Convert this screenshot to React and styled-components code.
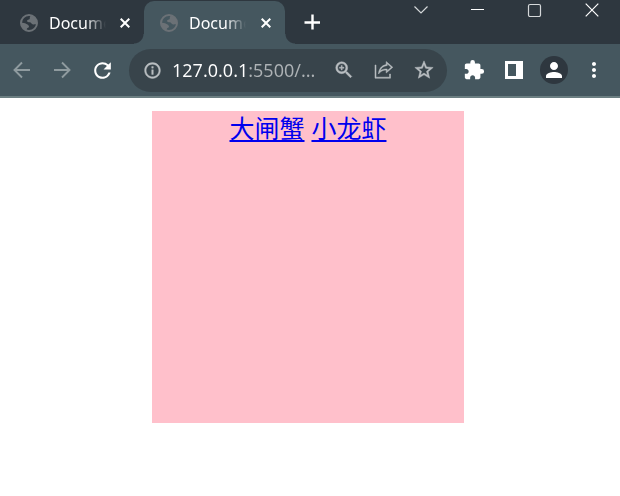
import React from "react";
import styled, { createGlobalStyle } from "styled-components";
import {
  MdExtension,
  MdInfoOutline,
  MdMoreVert,
  MdPerson,
  MdRefresh,
  MdStarBorder,
  MdZoomIn,
} from "react-icons/md";

const colors = {
  frame: "#2e373f",
  toolbar: "#45575f",
  field: "#38444b",
  divider: "#6c7f82",
  icon: "#ffffff",
  muted: "#b9bec1",
  disabled: "#8f9b9f",
};

const GlobalStyle = createGlobalStyle`
  * { box-sizing: border-box; }
  body { margin: 0; background: #ffffff; }
  button, input { font: inherit; color: inherit; }
`;

const Browser = styled.div`
  min-height: 100vh;
  display: flex;
  flex-direction: column;
  font-family: "Noto Sans", "Open Sans", sans-serif;
`;

const TitleBar = styled.header`
  display: flex;
  align-items: flex-start;
  height: 44px;
  padding-left: 4px;
  background: ${colors.frame};
`;

const TabList = styled.div`
  display: flex;
  align-self: stretch;
  padding-top: 1px;
`;

const Tab = styled.div`
  position: relative;
  display: flex;
  align-items: center;
  width: ${(p) => (p.$active ? 141 : 140)}px;
  padding: 0 10px 0 15px;
  border-radius: 10px 10px 0 0;
  background: ${(p) => (p.$active ? colors.toolbar : "transparent")};

  &::before,
  &::after {
    content: "";
    display: ${(p) => (p.$active ? "block" : "none")};
    position: absolute;
    bottom: 0;
    width: 10px;
    height: 10px;
  }
  &::before {
    right: 100%;
    background: radial-gradient(circle at 0 0, transparent 9px, ${colors.toolbar} 10px);
  }
  &::after {
    left: 100%;
    background: radial-gradient(circle at 100% 0, transparent 9px, ${colors.toolbar} 10px);
  }
`;

const TabButton = styled.button`
  display: flex;
  align-items: center;
  gap: 10px;
  flex: 1;
  min-width: 0;
  padding: 0;
  border: 0;
  background: none;
  color: #ffffff;
  font-size: 16px;
  line-height: 24px;
`;

const TabTitle = styled.span`
  width: 57px;
  overflow: hidden;
  white-space: nowrap;
  text-align: left;
  mask-image: linear-gradient(to right, #000 36px, transparent 57px);
`;

const IconButton = styled.button`
  display: flex;
  align-items: center;
  justify-content: center;
  flex: none;
  width: ${(p) => p.$width || 40}px;
  height: ${(p) => p.$height || 40}px;
  padding: 0;
  border: 0;
  background: none;
  color: ${(p) => p.$color || colors.icon};
`;

const WindowControls = styled.div`
  display: flex;
  margin-left: auto;
`;

const Toolbar = styled.nav`
  display: flex;
  align-items: center;
  height: 54px;
  padding: 0 6px 0 2px;
  background: ${colors.toolbar};
  border-bottom: 2px solid ${colors.divider};
`;

const AddressBar = styled.div`
  display: flex;
  align-items: center;
  flex: 1;
  min-width: 0;
  height: 43px;
  margin: 0 7px;
  padding: 0 3px;
  border-radius: 22px;
  background: ${colors.field};
`;

const AddressInput = styled.input`
  flex: 1;
  min-width: 0;
  padding: 0;
  border: 0;
  outline: 0;
  font-size: 18px;
  line-height: 26px;
  background: linear-gradient(to right, #ffffff 74px, #adb2b5 74px);
  background-clip: text;
  -webkit-background-clip: text;
  -webkit-text-fill-color: transparent;
`;

const FieldButton = styled(IconButton)`
  color: ${colors.muted};

  path:not([fill="none"]) {
    stroke: currentColor;
    stroke-width: 0.5px;
  }
`;

const Avatar = styled.span`
  display: flex;
  align-items: center;
  justify-content: center;
  width: 28px;
  height: 28px;
  border-radius: 50%;
  background: ${colors.frame};
`;

const Page = styled.main`
  flex: 1;
  padding: 13px 4px 13px 0;
`;

const PinkBox = styled.section`
  width: 312px;
  height: 312px;
  margin: 0 auto;
  background: #ffc0cb;
  text-align: center;
  font-family: "Liberation Sans", "Noto Sans CJK SC", sans-serif;
  font-size: 25px;
  line-height: 36px;
`;

const PageLink = styled.a`
  color: #0000ee;
  text-decoration: underline;
  text-decoration-thickness: 2px;
  text-underline-offset: 2px;
`;

const Stroke = styled.svg`
  display: block;
  fill: none;
  stroke: currentColor;
`;

const GlobeIcon = styled.svg`
  flex: none;
  fill: none;
  stroke: #6b7176;
`;

const Favicon = () => (
  <GlobeIcon width="20" height="20" viewBox="0 0 20 20" strokeWidth="2">
    <circle cx="10" cy="10" r="8" />
    <path
      fill="#6b7176"
      stroke="none"
      d="M12 2.5C11 3.5 10.5 4.5 10.8 6c-1 .8-2.8.5-2.8 2 0 1 1.5 1.2 3 1.2 1.5.3 1.5 2 3 2.2 1.500.2 2.500-.7 4-.4V8C17 5 15 3 12 2.500zM2 9.500c2 .2 3.500.4 5.500 1.500 1.500.8 2.500 1.500 2.500 2.500 0 1.200-1.500 1.200-2 2-.3.7 0 1.500-.5 2C4.500 16.500 2 13.500 2 9.500z"
    />
  </GlobeIcon>
);

const TabCloseIcon = () => (
  <Stroke width="10" height="10" viewBox="0 0 10 10" strokeWidth="2">
    <path d="M.7.7 9.3 9.3M9.3.7.7 9.3" />
  </Stroke>
);

const PlusIcon = () => (
  <Stroke width="16" height="16" viewBox="0 0 16 16" strokeWidth="2.4">
    <path d="M8.5 .5v15M.5 8.5h16" />
  </Stroke>
);

const ChevronIcon = () => (
  <Stroke width="14" height="8" viewBox="0 0 14 8" strokeWidth="1.2">
    <path d="M.5.5 7 7 13.5.5" />
  </Stroke>
);

const MinimizeIcon = () => (
  <Stroke width="13" height="2" viewBox="0 0 13 2" strokeWidth="1">
    <path d="M0 .5h13" />
  </Stroke>
);

const MaximizeIcon = () => (
  <Stroke width="15" height="14" viewBox="0 0 15 14" strokeWidth="1.2">
    <rect x="1.5" y="1.5" width="12" height="12" rx="1.5" />
  </Stroke>
);

const CloseIcon = () => (
  <Stroke width="14" height="14" viewBox="0 0 14 14" strokeWidth="1.2">
    <path d="M.7.7l12.6 12.6M13.3.7.7 13.3" />
  </Stroke>
);

const BackIcon = () => (
  <Stroke width="18" height="18" viewBox="0 0 18 18" strokeWidth="1.9">
    <path d="M17 9H2M9 1.5 1.5 9 9 16.5" />
  </Stroke>
);

const ForwardIcon = () => (
  <Stroke width="18" height="18" viewBox="0 0 18 18" strokeWidth="1.9">
    <path d="M1 9h15M9 1.5 16.5 9 9 16.5" />
  </Stroke>
);

const ShareIcon = () => (
  <svg width="20" height="20" viewBox="0 0 20 20" fill="currentColor" aria-hidden="true">
    <path d="M1 5h1v12.200h13.500V14h1v4.200H1z" />
    <path
      fillRule="evenodd"
      d="M12.200 1.500l6.600 5.800-6.600 5.700V10C9 10 6.800 11 4.500 14c.3-5 3.200-8.700 7.700-9.400zM13.200 3.700v1.800C9.300 6 7 8 6 11c2-1.500 4.200-2 7.200-2v1.800l4-3.500z"
    />
  </svg>
);

const SidePanelIcon = () => (
  <Stroke width="18" height="18" viewBox="0 0 18 18" strokeWidth="3">
    <path d="M1.5 1.5h15v15h-15z" />
    <path fill="currentColor" stroke="none" d="M11 1h6v16h-6z" />
  </Stroke>
);

const tabs = [
  { id: 1, title: "Document", active: false },
  { id: 2, title: "Document", active: true },
];

const links = ["大闸蟹", "小龙虾"];

export default function App() {
  return (
    <Browser>
      <GlobalStyle />
      <TitleBar>
        <TabList role="tablist">
          {tabs.map((tab) => (
            <Tab key={tab.id} $active={tab.active}>
              <TabButton role="tab" aria-selected={tab.active}>
                <Favicon />
                <TabTitle>{tab.title}</TabTitle>
              </TabButton>
              <IconButton $width={18} $height={18} aria-label="Close tab">
                <TabCloseIcon />
              </IconButton>
            </Tab>
          ))}
        </TabList>
        <IconButton $width={54} $height={44} aria-label="New tab">
          <PlusIcon />
        </IconButton>
        <WindowControls>
          <IconButton $width={56} $height={20} $color="#d5d8da" aria-label="Search tabs">
            <ChevronIcon />
          </IconButton>
          <IconButton $width={57} $height={20} aria-label="Minimize">
            <MinimizeIcon />
          </IconButton>
          <IconButton $width={57} $height={20} $color="#d5d8da" aria-label="Maximize">
            <MaximizeIcon />
          </IconButton>
          <IconButton $width={57} $height={20} aria-label="Close window">
            <CloseIcon />
          </IconButton>
        </WindowControls>
      </TitleBar>

      <Toolbar aria-label="Browser toolbar">
        <IconButton $color={colors.disabled} aria-label="Back">
          <BackIcon />
        </IconButton>
        <IconButton $color={colors.disabled} aria-label="Forward">
          <ForwardIcon />
        </IconButton>
        <IconButton aria-label="Reload">
          <MdRefresh size={25} />
        </IconButton>
        <AddressBar>
          <FieldButton aria-label="Site information">
            <MdInfoOutline size={19} />
          </FieldButton>
          <AddressInput aria-label="Address" type="text" defaultValue="127.0.0.1:5500/..." />
          <FieldButton aria-label="Zoom">
            <MdZoomIn size={22} />
          </FieldButton>
          <FieldButton aria-label="Share this page">
            <ShareIcon />
          </FieldButton>
          <FieldButton aria-label="Bookmark this page">
            <MdStarBorder size={22} />
          </FieldButton>
        </AddressBar>
        <IconButton aria-label="Extensions">
          <MdExtension size={22} />
        </IconButton>
        <IconButton aria-label="Side panel">
          <SidePanelIcon />
        </IconButton>
        <IconButton aria-label="Profile">
          <Avatar>
            <MdPerson size={24} />
          </Avatar>
        </IconButton>
        <IconButton aria-label="Menu">
          <MdMoreVert size={24} />
        </IconButton>
      </Toolbar>

      <Page>
        <PinkBox>
          {links.map((label, index) => (
            <React.Fragment key={label}>
              {index > 0 && " "}
              <PageLink href="#">{label}</PageLink>
            </React.Fragment>
          ))}
        </PinkBox>
      </Page>
    </Browser>
  );
}
